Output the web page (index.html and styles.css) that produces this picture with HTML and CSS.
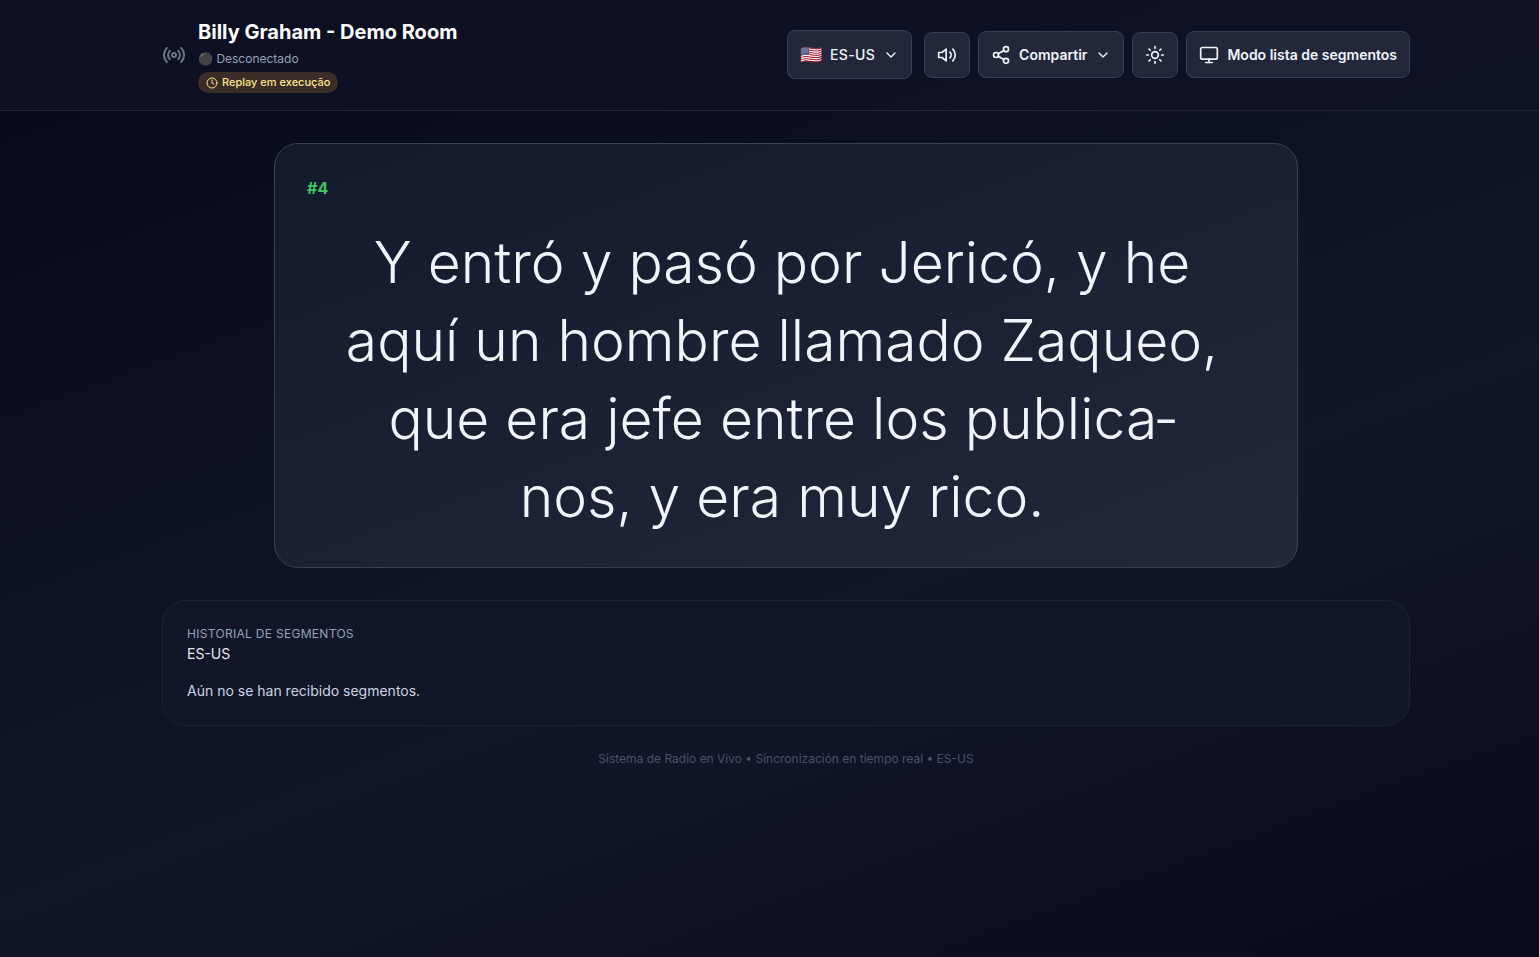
FILE: index.html
```html
<!DOCTYPE html>
<html lang="es">
<head>
<meta charset="utf-8">
<meta name="viewport" content="width=device-width, initial-scale=1">
<title>Billy Graham - Demo Room</title>
<link rel="stylesheet" href="styles.css">
</head>
<body>
<header class="topbar">
  <div class="container topbar-row">
    <div class="brand">
      <svg class="icon icon-lg brand-icon" viewBox="0 0 24 24" aria-hidden="true"><path d="M4.9 19.1C1 15.2 1 8.8 4.9 4.9"/><path d="M7.8 16.2c-2.3-2.3-2.3-6.1 0-8.5"/><circle cx="12" cy="12" r="2"/><path d="M16.2 7.8c2.3 2.3 2.3 6.1 0 8.5"/><path d="M19.1 4.9C23 8.8 23 15.1 19.1 19"/></svg>
      <div class="brand-text">
        <h1 class="title">Billy Graham - Demo Room</h1>
        <p class="status">⚫ Desconectado</p>
        <span class="badge"><svg class="icon icon-xs" viewBox="0 0 24 24" aria-hidden="true"><circle cx="12" cy="12" r="10"/><path d="M12 6v6l4 2"/></svg>Replay em execução</span>
      </div>
    </div>
    <div class="actions">
      <button class="btn btn-lang" type="button"><span class="flag">🇺🇸</span>ES-US<svg class="icon icon-sm" viewBox="0 0 24 24" aria-hidden="true"><path d="m6 9 6 6 6-6"/></svg></button>
      <button class="btn btn-square" type="button" aria-label="Audio"><svg class="icon" viewBox="0 0 24 24" aria-hidden="true"><path d="M11 5 6 9H2v6h4l5 4z"/><path d="M15.5 8.5a5 5 0 0 1 0 7"/><path d="M19 5a10 10 0 0 1 0 14"/></svg></button>
      <button class="btn" type="button"><svg class="icon" viewBox="0 0 24 24" aria-hidden="true"><circle cx="18" cy="5" r="3"/><circle cx="6" cy="12" r="3"/><circle cx="18" cy="19" r="3"/><path d="m8.6 13.5 6.8 4"/><path d="m15.4 6.5-6.8 4"/></svg>Compartir<svg class="icon icon-sm" viewBox="0 0 24 24" aria-hidden="true"><path d="m6 9 6 6 6-6"/></svg></button>
      <button class="btn btn-square" type="button" aria-label="Tema"><svg class="icon" viewBox="0 0 24 24" aria-hidden="true"><circle cx="12" cy="12" r="4"/><path d="M12 2v2"/><path d="M12 20v2"/><path d="m4.9 4.9 1.4 1.4"/><path d="m17.7 17.7 1.4 1.4"/><path d="M2 12h2"/><path d="M20 12h2"/><path d="m6.3 17.7-1.4 1.4"/><path d="m19.1 4.9-1.4 1.4"/></svg></button>
      <button class="btn" type="button"><svg class="icon" viewBox="0 0 24 24" aria-hidden="true"><rect x="2" y="3" width="20" height="14" rx="2"/><path d="M8 21h8"/><path d="M12 17v4"/></svg>Modo lista de segmentos</button>
    </div>
  </div>
</header>
<main class="content">
  <div class="container">
    <section class="card">
      <span class="number">#4</span>
      <p class="verse">Y entró y pasó por Jericó, y he aquí un hombre llamado Zaqueo, que era jefe entre los publica&shy;nos, y era muy rico.</p>
    </section>
    <section class="history">
      <h2 class="history-title">Historial de segmentos</h2>
      <p class="history-lang">ES-US</p>
      <p class="history-empty">Aún no se han recibido segmentos.</p>
    </section>
    <footer class="footer">Sistema de Radio en Vivo • Sincronización en tiempo real • ES-US</footer>
  </div>
</main>
</body>
</html>
```
FILE: styles.css
```css
*, *::before, *::after { box-sizing: border-box; }
html { min-height: 100%; background: #080b1b; }
body {
  margin: 0;
  min-height: 100vh;
  background: linear-gradient(160deg, #070918 0%, #111729 60%, #0a0b1d 100%);
  color: #f1f5f9;
  font-family: Inter, "Liberation Sans", sans-serif;
  font-size: 14px;
  line-height: 20px;
}
h1, h2, p { margin: 0; }
.topbar {
  padding: 16px 0 17px 33px;
  border-bottom: 1px solid #202637;
  background: rgba(15, 19, 38, 0.75);
}
.container { max-width: 1280px; margin: 0 auto; padding: 0 16px; }
.topbar-row { display: flex; align-items: center; justify-content: space-between; gap: 16px; }
.brand { display: flex; align-items: center; gap: 12px; }
.brand-icon { color: #6b7280; }
.brand-text { display: flex; flex-direction: column; align-items: flex-start; }
.title { font-size: 20px; line-height: 32px; font-weight: 700; color: #fff; }
.status { margin: 2px 0 4px; font-size: 12px; line-height: 18px; color: #94a3b8; }
.badge {
  display: inline-flex; align-items: center; gap: 4px;
  padding: 2px 8px; border-radius: 999px;
  background: #3a2d28; color: #fde68a;
  font-size: 11px; line-height: 17px; font-weight: 500;
}
.icon { width: 20px; height: 20px; flex: none; fill: none; stroke: currentColor; stroke-width: 2; stroke-linecap: round; stroke-linejoin: round; }
.icon-lg { width: 24px; height: 24px; }
.icon-sm { width: 16px; height: 16px; }
.icon-xs { width: 12px; height: 12px; }
.actions { display: flex; align-items: center; gap: 8px; }
.btn {
  display: inline-flex; align-items: center; justify-content: center; gap: 8px;
  height: 47px; padding: 0 12px;
  border: 1px solid #334155; border-radius: 8px;
  background: #22283a; color: #f1f5f9;
  font: 600 14px/20px Inter, "Liberation Sans", sans-serif;
}
.btn-lang { height: 49px; margin-right: 4px; font-weight: 500; letter-spacing: 0.025em; }
.btn-square { width: 46px; height: 46px; padding: 0; }
.flag { font-size: 18px; }
.content { padding: 32px 0 32px 33px; }
.card {
  max-width: 1024px; margin: 0 auto 32px; padding: 32px 32px 31px;
  border: 1px solid #374151; border-radius: 24px;
  background: linear-gradient(160deg, #131a2b, #22283a);
}
.number { display: block; font-size: 16px; line-height: 24px; font-weight: 700; color: #41c463; }
.verse {
  padding: 24px 46px 0 38px;
  font-size: 57px; line-height: 78px; font-weight: 300; text-align: center; color: #f1f5f9;
}
.history { padding: 25px 24px 23px; border: 1px solid #1e2436; border-radius: 24px; background: #111729; }
.history-title { font-size: 12px; line-height: 16px; font-weight: 400; letter-spacing: 0.025em; text-transform: uppercase; color: #94a3b8; }
.history-lang { line-height: 24px; color: #e5e7eb; }
.history-empty { margin-top: 14px; line-height: 22px; color: #cbd5e1; }
.footer { padding-top: 24px; font-size: 12px; line-height: 18px; text-align: center; color: #475569; }
```
